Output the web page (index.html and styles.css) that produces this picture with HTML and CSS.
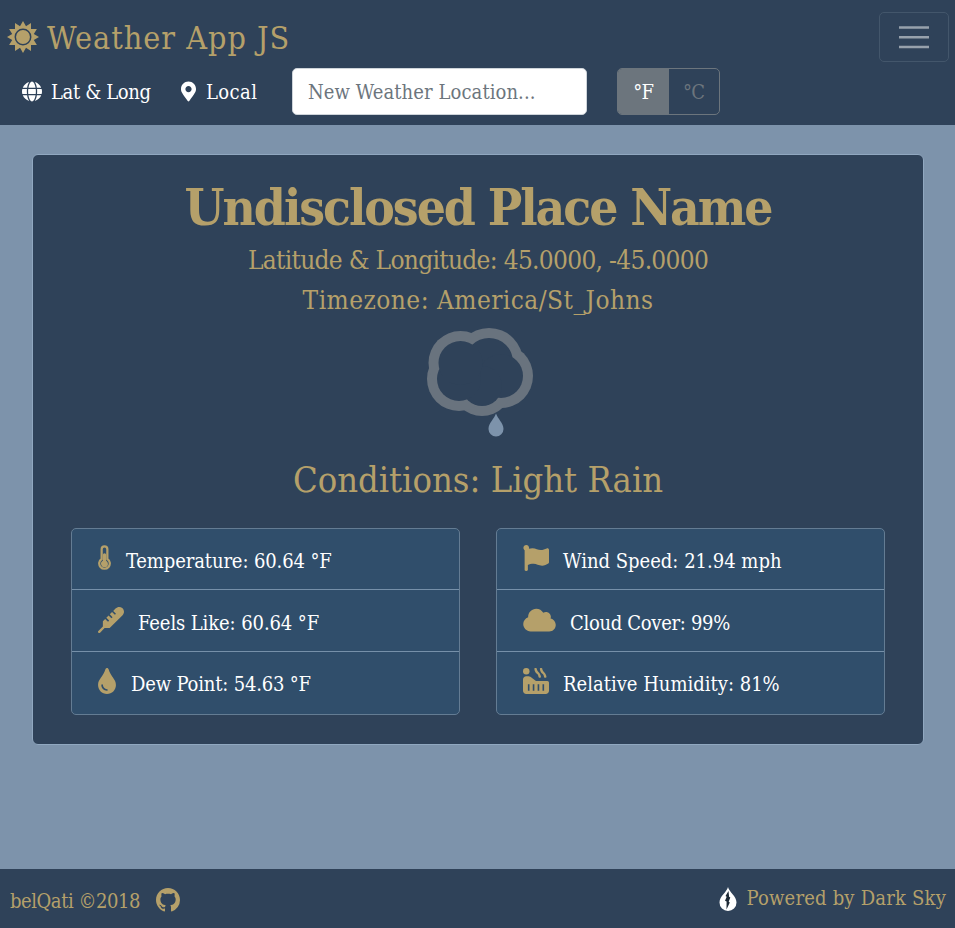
FILE: index.html
```html
<!DOCTYPE html>
<html lang="en">
<head>
<meta charset="utf-8">
<title>Weather App JS</title>
<link rel="stylesheet" href="styles.css">
</head>
<body>
<header class="navbar">
  <div class="navbar-top">
    <a class="brand">
      <svg class="sun" viewBox="-16 -16 32 32"><path fill="currentColor" d="M0-16 3-10.8 8-13.9 8-8 13.9-8 10.8-3 16 0 10.8 3 13.9 8 8 8 8 13.9 3 10.8 0 16-3 10.8-8 13.9-8 8-13.9 8-10.8 3-16 0-10.8-3-13.9-8-8-8-8-13.9-3-10.8z"/><circle class="sun-ring" r="7.7"/></svg>
      <span class="brand-text">Weather App JS</span>
    </a>
    <button class="toggler" aria-label="Menu"><svg viewBox="0 0 30 30"><path d="M0 5.500h30M0 15.300h30M0 25h30"/></svg></button>
  </div>
  <div class="navbar-tools">
    <a class="nav-link latlong"><svg class="globe" viewBox="0 0 496 512"><path fill="currentColor" d="M336.5 160C322 70.7 287.8 8 248 8s-74 62.700-88.500 152h177zM152 256c0 22.200 1.200 43.500 3.300 64h185.300c2.100-20.500 3.300-41.800 3.300-64s-1.200-43.500-3.300-64H155.300c-2.100 20.500-3.300 41.800-3.300 64zm324.700-96c-28.600-67.900-86.500-120.400-158-141.600 24.400 33.800 41.200 84.700 50 141.600h108zM177.200 18.400C105.800 39.600 47.800 92.100 19.300 160h108c8.700-56.900 25.500-107.800 49.900-141.600zM487.400 192H372.700c2.100 21 3.300 42.500 3.300 64s-1.200 43-3.300 64h114.600c5.500-20.500 8.600-41.800 8.600-64s-3.100-43.500-8.500-64zM120 256c0-21.500 1.200-43 3.300-64H8.600C3.200 212.500 0 233.800 0 256s3.200 43.500 8.600 64h114.600c-2-21-3.200-42.500-3.200-64zm39.500 96c14.500 89.300 48.700 152 88.500 152s74-62.700 88.500-152h-177zm159.300 141.600c71.400-21.200 129.400-73.700 158-141.600h-108c-8.800 56.900-25.600 107.800-50 141.600zM19.300 352c28.600 67.900 86.500 120.400 158 141.600-24.400-33.800-41.200-84.700-50-141.600h-108z"/></svg><span>Lat &amp; Long</span></a>
    <a class="nav-link local"><svg class="marker" viewBox="0 0 384 512"><path fill="currentColor" d="M172.268 501.67C26.97 291.031 0 269.413 0 192 0 85.961 85.961 0 192 0s192 85.961 192 192c0 77.413-26.97 99.031-172.268 309.67-9.535 13.774-29.93 13.773-39.464 0zM192 272c44.183 0 80-35.817 80-80s-35.817-80-80-80-80 35.817-80 80 35.817 80 80 80z"/></svg><span>Local</span></a>
    <input class="search" type="text" placeholder="New Weather Location...">
    <div class="units"><button class="unit active">°F</button><button class="unit">°C</button></div>
  </div>
</header>

<main class="main">
  <section class="card">
    <h1 class="place"><span>Undisclosed Place Name</span></h1>
    <p class="coords"><span>Latitude &amp; Longitude: 45.0000, -45.0000</span></p>
    <p class="timezone"><span>Timezone: America/St_Johns</span></p>
    <svg class="sky" viewBox="414 318 128 128">
      <g class="cloud-edge"><circle cx="489" cy="362" r="34"/><circle cx="501" cy="376" r="32"/><circle cx="482" cy="386" r="30"/><circle cx="459" cy="379" r="32"/><circle cx="460.500" cy="363" r="32"/></g>
      <g class="cloud-hole"><circle cx="489" cy="362" r="24"/><circle cx="501" cy="376" r="22"/><circle cx="482" cy="386" r="20"/><circle cx="459" cy="379" r="22"/><circle cx="460.500" cy="363" r="22"/></g>
      <path class="raindrop" d="M496 413.500c-1.500 5-7.500 9.500-7.500 15.500a7.500 7.500 0 0 0 15 0c0-6-6-10.500-7.500-15.500z"/>
    </svg>
    <h2 class="conditions"><span>Conditions: Light Rain</span></h2>
    <div class="details">
      <ul class="list">
        <li><svg class="icon w13" viewBox="0 0 256 512"><path class="thermo-tube" d="M72 276V84a56 56 0 0 1 112 0v192a104 104 0 1 1-112 0z"/><path fill="currentColor" d="M196 372a68 68 0 1 1-100-60V192a32 32 0 0 1 64 0v120A68 68 0 0 1 196 372z"/></svg><span class="temperature">Temperature: 60.64 °F</span></li>
        <li><svg class="icon w26" viewBox="0 0 512 512"><path fill="currentColor" d="M476.800 20.400c-37.500-30.700-95.500-26.300-131.900 10.200l-45.700 46 50.500 50.500c3.100 3.100 3.100 8.200 0 11.300l-11.300 11.300c-3.100 3.100-8.200 3.100-11.300 0l-50.400-50.500-45.100 45.400 50.300 50.400c3.100 3.100 3.100 8.200 0 11.300l-11.300 11.300c-3.100 3.100-8.200 3.100-11.300 0L209 167.400l-45.100 45.400L214 263c3.100 3.100 3.100 8.200 0 11.300l-11.300 11.300c-3.100 3.100-8.200 3.100-11.300 0l-50.100-50.200L96 281.100V382L7 471c-9.400 9.400-9.400 24.600 0 33.900 9.400 9.400 24.600 9.400 33.900 0l89-89h99.900L484 162.600c34.900-34.900 42.200-101.500-7.200-142.200z"/></svg><span class="feels-like">Feels Like: 60.64 °F</span></li>
        <li><svg class="icon w18" viewBox="0 0 352 512"><path fill="currentColor" d="M205.220 22.090c-7.940-28.780-49.440-30.120-58.440 0C100.010 179.850 0 222.720 0 333.910 0 432.350 78.720 512 176 512s176-79.650 176-178.090c0-111.750-99.790-153.340-146.780-311.820zM176 448c-61.750 0-112-50.250-112-112 0-8.840 7.160-16 16-16s16 7.160 16 16c0 44.110 35.890 80 80 80 8.840 0 16 7.160 16 16s-7.160 16-16 16z"/></svg><span class="dew-point">Dew Point: 54.63 °F</span></li>
      </ul>
      <ul class="list">
        <li><svg class="icon w26" viewBox="0 0 512 512"><path fill="currentColor" d="M349.565 98.783C295.978 98.783 251.721 64 184.348 64c-24.955 0-47.309 4.384-68.045 12.013a55.947 55.947 0 0 0 3.586-23.562C118.117 24.015 94.806 1.206 66.338.048 34.345-1.254 8 24.296 8 56c0 19.026 9.497 35.825 24 45.945V488c0 13.255 10.745 24 24 24h16c13.255 0 24-10.745 24-24v-94.400c28.311-12.064 63.582-22.122 114.435-22.122 53.588 0 97.844 34.783 165.217 34.783 48.169 0 86.667-16.294 122.505-40.858C506.840 359.452 512 349.571 512 339.045v-243.100c0-23.393-24.269-38.870-45.485-29.016-34.338 15.948-76.454 31.854-116.950 31.854z"/></svg><span>Wind Speed: 21.94 mph</span></li>
        <li><svg class="icon w33" viewBox="0 0 640 512"><path fill="currentColor" d="M537.600 226.600c4.100-10.700 6.400-22.400 6.400-34.600 0-53-43-96-96-96-19.700 0-38.100 6-53.300 16.200C367 64.200 315.300 32 256 32c-88.400 0-160 71.600-160 160 0 2.700.1 5.400.2 8.100C40.200 219.800 0 273.200 0 336c0 79.500 64.500 144 144 144h368c70.700 0 128-57.300 128-128 0-61.900-44-113.600-102.400-125.400z"/></svg><span class="cloud-cover">Cloud Cover: 99%</span></li>
        <li><svg class="icon w26" viewBox="0 0 512 512"><g fill="currentColor"><circle cx="64" cy="64" r="64"/><path fill-rule="evenodd" d="M480 256H256l-110.930-83.200A64 64 0 0 0 106.670 160H64c-35.350 0-64 28.650-64 64v224c0 35.350 28.650 64 64 64h384c35.350 0 64-28.650 64-64V288c0-17.670-14.330-32-32-32zM96 320h32v128H96zM192 320h32v128h-32zM288 320h32v128h-32zM384 320h32v128h-32z"/><path d="M414.210 177.650c1.020 8.210 7.750 14.350 15.750 14.350h16.120c9.510 0 17.080-8.570 16-18.350-4.340-39.110-22.400-74.530-50.130-97.160-17.370-14.170-28.820-36.750-31.980-62.150C378.960 6.140 372.220 0 364.230 0h-16.120c-9.510 0-17.090 8.570-16 18.350 4.340 39.110 22.400 74.530 50.130 97.160 17.360 14.170 28.820 36.750 31.970 62.140z"/><path transform="translate(-108 0)" d="M414.210 177.650c1.020 8.210 7.750 14.350 15.750 14.350h16.120c9.510 0 17.080-8.570 16-18.350-4.340-39.110-22.400-74.530-50.130-97.160-17.370-14.170-28.820-36.750-31.980-62.150C378.960 6.140 372.220 0 364.230 0h-16.120c-9.510 0-17.090 8.570-16 18.350 4.340 39.110 22.400 74.530 50.130 97.160 17.360 14.170 28.820 36.750 31.970 62.140z"/></g></svg><span>Relative Humidity: 81%</span></li>
      </ul>
    </div>
  </section>
</main>

<footer class="footer">
  <div class="credit"><span class="author">belQati ©2018</span><svg class="github" viewBox="0 0 16 16"><path fill="currentColor" d="M8 0C3.580 0 0 3.580 0 8c0 3.540 2.290 6.530 5.470 7.590.4.070.55-.17.55-.38 0-.19-.01-.82-.01-1.490-2.010.37-2.530-.49-2.690-.94-.09-.23-.48-.94-.82-1.130-.28-.15-.68-.52-.01-.53.63-.01 1.080.58 1.230.82.72 1.210 1.870.87 2.330.66.07-.52.28-.87.51-1.070-1.780-.2-3.640-.89-3.640-3.950 0-.87.31-1.590.82-2.150-.08-.2-.36-1.020.08-2.120 0 0 .67-.21 2.200.82.64-.18 1.320-.27 2-.27s1.360.09 2 .27c1.530-1.040 2.200-.82 2.200-.82.44 1.100.16 1.920.08 2.120.51.56.82 1.270.82 2.150 0 3.070-1.870 3.750-3.650 3.950.29.25.54.73.54 1.480 0 1.070-.01 1.930-.01 2.200 0 .21.15.46.55.38A8.010 8.010 0 0 0 16 8c0-4.420-3.580-8-8-8z"/></svg></div>
  <div class="powered"><svg class="darksky" viewBox="0 0 18 24"><path class="ds-drop" d="M9 0C8 5 .5 9 .5 15.500a8.500 8.500 0 0 0 17 0C17.500 9 10 5 9 0z"/><path class="ds-bolt" d="M9.500 4 6.500 9l1.200.8-1.700 4 1.600.8L7.500 22.500l3.300-7-1.100-.8 1.600-4.200-1.200-.7z"/></svg><span class="source">Powered by Dark Sky</span></div>
</footer>
</body>
</html>
```
FILE: styles.css
```css
* { box-sizing: border-box; }
body {
  margin: 0;
  height: 928px;
  display: flex;
  flex-direction: column;
  background: #7d93ab;
  color: #b5a06a;
  font-family: "Roboto Slab", "DejaVu Serif Condensed", "DejaVu Serif", serif;
  font-stretch: condensed;
  font-size: 20px;
  line-height: 30px;
}
h1, h2, p, ul { margin: 0; padding: 0; font-weight: 400; }
svg { display: block; flex: none; }
span { white-space: nowrap; }

.navbar { height: 125px; background: #2f4259; }
.navbar-top { display: flex; justify-content: space-between; padding: 12px 6px 0 7px; height: 68px; }
.brand { display: flex; align-items: center; height: 50px; gap: 8px; font-size: 32px; letter-spacing: 1px; }
.brand-text { padding-top: 2px; }
.sun { width: 32px; height: 32px; }
.sun-ring { fill: currentColor; stroke: #2f4259; stroke-width: 1.5px; }
.toggler { width: 70px; height: 50px; padding: 0; border: 1px solid #43566b; border-radius: 5px; background: none; display: flex; align-items: center; justify-content: center; }
.toggler svg { width: 30px; height: 30px; overflow: visible; }
.toggler path { stroke: #97a1ac; stroke-width: 2.4px; fill: none; }
.navbar-tools { display: flex; align-items: center; height: 47px; padding-left: 22px; }
.nav-link { display: flex; align-items: center; color: #fff; }
.globe { width: 20px; height: 21px; margin-right: 9px; }
.latlong { width: 159px; letter-spacing: -0.35px; }
.marker { width: 15px; height: 21px; margin-right: 10px; }
.local { width: 111px; letter-spacing: 0.4px; }
.search { width: 295px; height: 47px; padding: 0 15px; border: 1px solid #ced4da; border-radius: 5px; background: #fff; font: inherit; font-stretch: condensed; letter-spacing: 0.08px; }
.search::placeholder { color: #6c757d; opacity: 1; }
.units { display: flex; width: 103px; height: 47px; margin-left: 30px; border: 1px solid #6c757d; border-radius: 5px; overflow: hidden; }
.unit { flex: 1; padding: 0; border: 0; background: none; color: #6c757d; font: inherit; font-stretch: condensed; letter-spacing: -0.7px; }
.unit.active { background: #6c757d; color: #fff; }

.main { flex: 1; padding: 29px 31px 0 32px; }
.card { height: 591px; border: 1px solid #91a8c0; border-radius: 6px; background: #2f4259; display: flex; flex-direction: column; align-items: center; padding: 20px 38px 0; }
.place { font-size: 51px; font-weight: 700; line-height: 64px; letter-spacing: -2.05px; }
.coords, .timezone { font-size: 26px; line-height: 40px; }
.coords { margin-top: 1px; letter-spacing: -0.69px; }
.timezone { letter-spacing: 0.46px; }
.sky { width: 128px; height: 128px; margin-top: -2px; }
.cloud-edge { fill: #69737e; }
.cloud-hole { fill: #2f4259; }
.raindrop { fill: #7d93ab; }
.conditions { font-size: 36px; line-height: 50px; margin-top: 9px; }
.details { display: flex; justify-content: space-between; width: 100%; margin-top: 23px; }
.list { width: 389px; list-style: none; border: 1px solid #647c93; border-radius: 5px; background: #304e6b; color: #fff; }
.list li { display: flex; align-items: flex-start; height: 60px; padding: 16px 25px 0 26px; }
.list li + li { height: 62px; padding-top: 17px; border-top: 1px solid #7690a9; }
.list li:last-child { height: 63px; padding-top: 16px; }
.list span { margin-top: 1px; }
.icon { height: 26px; margin-right: 14px; color: #b5a06a; }
.w13 { width: 13px; margin-right: 15px; }
.w18 { width: 18px; margin-right: 15px; }
.w26 { width: 26px; }
.w33 { width: 33px; }
.temperature { letter-spacing: -0.12px; }
.feels-like { letter-spacing: -0.1px; }
.dew-point { letter-spacing: -0.18px; }
.cloud-cover { letter-spacing: -0.31px; }
.thermo-tube { fill: none; stroke: currentColor; stroke-width: 44px; }

.footer { height: 59px; background: #2f4259; display: flex; justify-content: space-between; padding: 0 9px 0 10px; }
.credit { display: flex; align-items: center; height: 64px; letter-spacing: -0.45px; }
.github { width: 24px; height: 24px; margin-left: 16px; margin-top: -3px; }
.powered { display: flex; align-items: center; height: 57px; letter-spacing: 0.2px; }
.darksky { width: 18px; height: 24px; margin-right: 9px; margin-top: 3px; }
.ds-drop { fill: #fff; }
.ds-bolt { fill: #1d2935; }
```
